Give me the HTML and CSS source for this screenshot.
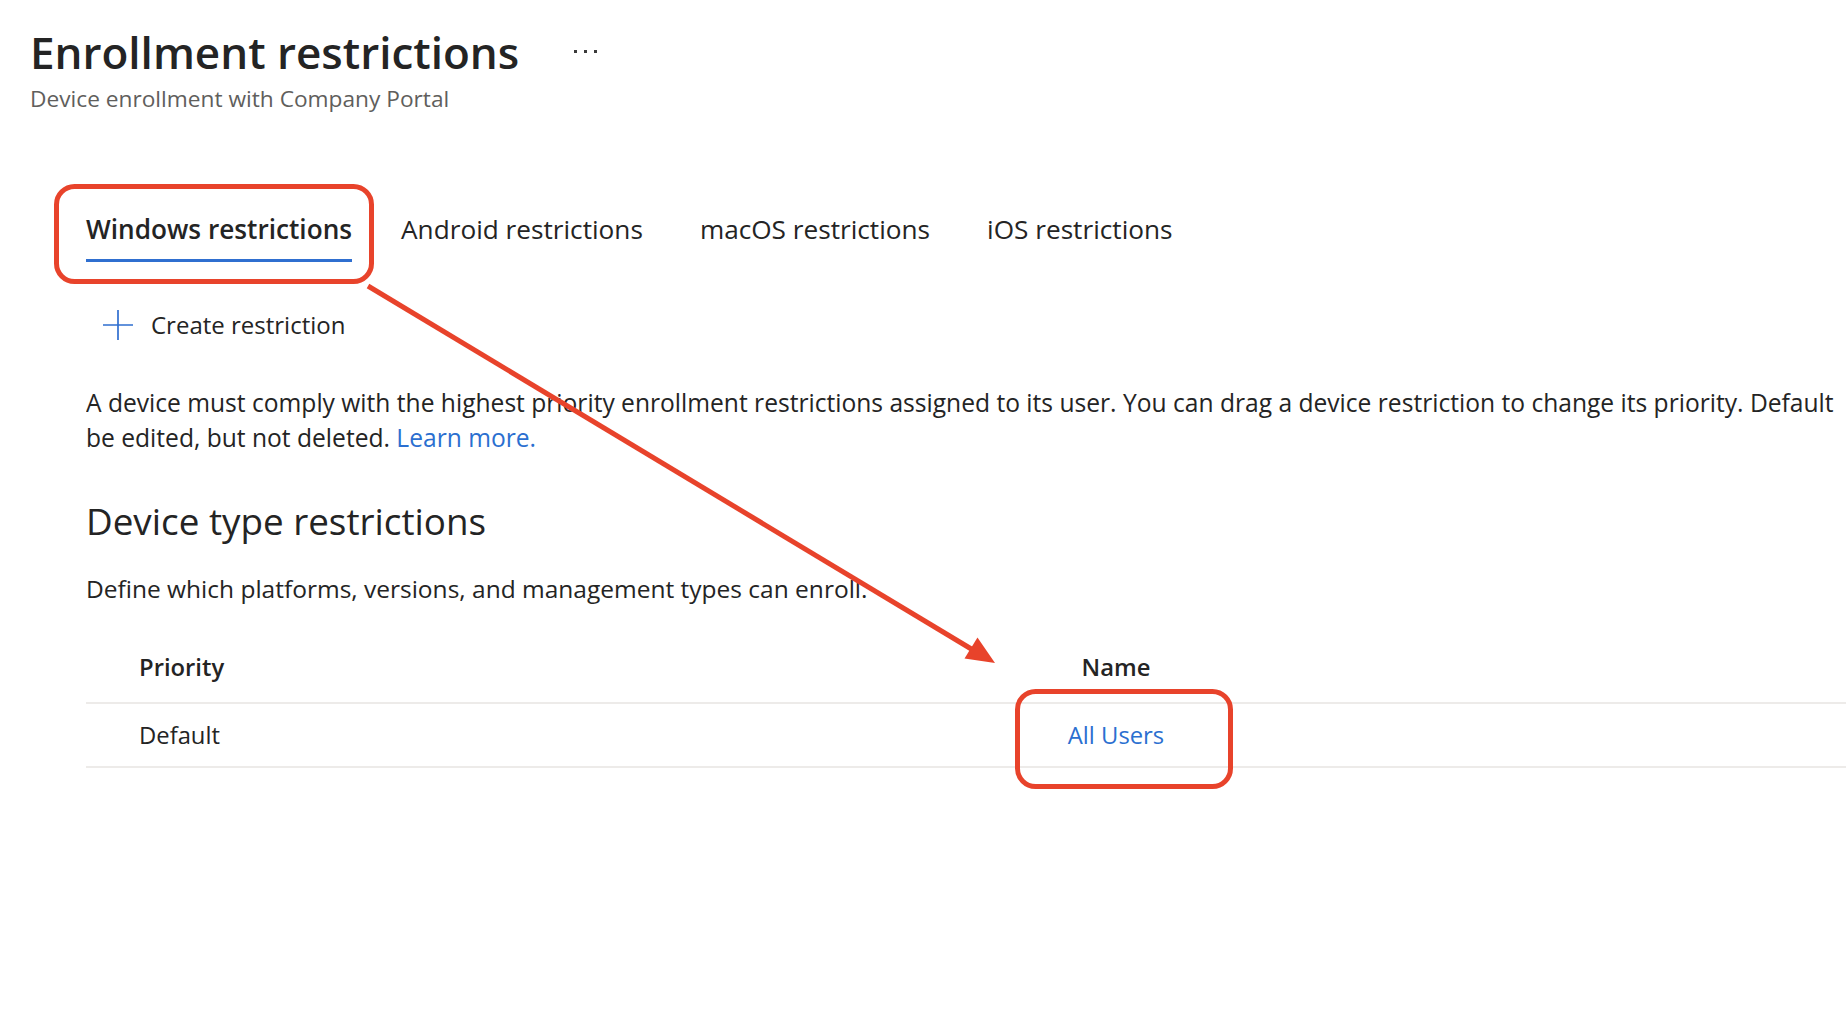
FILE: index.html
```
<!DOCTYPE html>
<html lang="en">
<head>
<meta charset="utf-8">
<title>Enrollment restrictions</title>
<link rel="stylesheet" href="styles.css">
</head>
<body>
<div class="page">
  <header class="page-header">
    <div class="title-row">
      <h1 class="title">Enrollment restrictions</h1>
      <span class="more"><i></i><i></i><i></i></span>
    </div>
    <div class="subtitle">Device enrollment with Company Portal</div>
  </header>

  <main class="content">
    <nav class="tabs">
      <div class="tab active">Windows restrictions</div>
      <div class="tab">Android restrictions</div>
      <div class="tab">macOS restrictions</div>
      <div class="tab">iOS restrictions</div>
    </nav>

    <div class="toolbar">
      <button class="cmd">
        <svg class="plus" width="30" height="30" viewBox="0 0 30 30"><path d="M15 0v30M0 15h30" stroke="#2f6fd0" stroke-width="1.7" fill="none"/></svg>
        <span>Create restriction</span>
      </button>
    </div>

    <div class="intro-clip">
      <p class="intro"><span>A device must comply with the highest priority enrollment restrictions assigned to its user. You can drag a device restriction to change its priority. Default</span><br>be edited, but not deleted. <a class="link" href="#">Learn more.</a></p>
    </div>

    <h2 class="section-title">Device type restrictions</h2>
    <p class="section-desc">Define which platforms, versions, and management types can enroll.</p>

    <div class="table">
      <div class="row head">
        <div class="cell prio">Priority</div>
        <div class="cell name">Name</div>
        <div class="cell rest"></div>
      </div>
      <div class="row">
        <div class="cell prio">Default</div>
        <div class="cell name"><a class="link" href="#">All Users</a></div>
        <div class="cell rest"></div>
      </div>
    </div>
  </main>
</div>

<svg class="annotations" width="1846" height="1030" viewBox="0 0 1846 1030">
  <rect x="56.5" y="186.5" width="315" height="95" rx="18" ry="18" fill="none" stroke="#e8432b" stroke-width="5"/>
  <rect x="1017.5" y="691.5" width="213" height="95" rx="18" ry="18" fill="none" stroke="#e8432b" stroke-width="5"/>
  <line x1="368" y1="286" x2="973" y2="650" stroke="#e8432b" stroke-width="5"/>
  <polygon points="995,663 964.5,658.5 977.5,637.5" fill="#e8432b"/>
</svg>
</body>
</html>
```

FILE: styles.css
```
html, body {
  margin: 0;
  padding: 0;
  background: #ffffff;
  overflow: hidden;
}

body {
  width: 1846px;
  height: 1030px;
  position: relative;
  font-family: "Open Sans", "Noto Sans", "Liberation Sans", sans-serif;
  color: #242424;
}

.page {
  padding: 21px 0 0 30px;
}

.title-row {
  display: flex;
  align-items: center;
}

.title {
  margin: 0;
  font-size: 44px;
  font-weight: 600;
  line-height: 62px;
  color: #242424;
}

.more {
  display: flex;
  gap: 7px;
  margin-left: 55px;
  padding-top: 0;
  margin-bottom: 2px;
}

.more i {
  display: block;
  width: 3px;
  height: 3px;
  background: #3b3b3b;
}

.subtitle {
  font-size: 22.7px;
  line-height: 30px;
  color: #605e5c;
  margin-top: 1px;
}

.content {
  padding-left: 56px;
}

.tabs {
  display: flex;
  gap: 57px;
  margin-top: 95px;
}

.tab {
  font-size: 26.2px;
  line-height: 40px;
  padding-bottom: 10px;
  border-bottom: 3px solid transparent;
  color: #242424;
}

.tab.active {
  font-weight: 600;
  border-bottom-color: #2f6fd0;
  margin-right: -8px;
}

.toolbar {
  margin-top: 46px;
  padding-left: 17px;
}

.cmd {
  display: flex;
  align-items: center;
  gap: 18px;
  background: none;
  border: none;
  padding: 0;
  font-family: inherit;
  font-size: 24px;
  color: #242424;
}

.intro-clip {
  margin-top: 44px;
  width: 1760px;
  overflow: hidden;
}

.intro {
  margin: 0;
  font-size: 24.6px;
  line-height: 35px;
  white-space: nowrap;
}

.link {
  color: #2b6fd0;
  text-decoration: none;
}

.section-title {
  margin: 41px 0 0 0;
  font-size: 36.8px;
  font-weight: 400;
  line-height: 50px;
}

.section-desc {
  margin: 27px 0 0 0;
  font-size: 24.5px;
  line-height: 32px;
}

.table {
  margin-top: 46px;
}

.row {
  display: grid;
  grid-template-columns: 914px 232px 1fr;
  align-items: center;
  height: 62px;
  border-bottom: 2px solid #edebe9;
  font-size: 23.8px;
}

.row.head {
  height: 51px;
  font-weight: 600;
  align-items: start;
}

.cell.prio {
  padding-left: 53px;
}

.cell.name {
  text-align: center;
}

.annotations {
  position: absolute;
  left: 0;
  top: 0;
  pointer-events: none;
}
```
